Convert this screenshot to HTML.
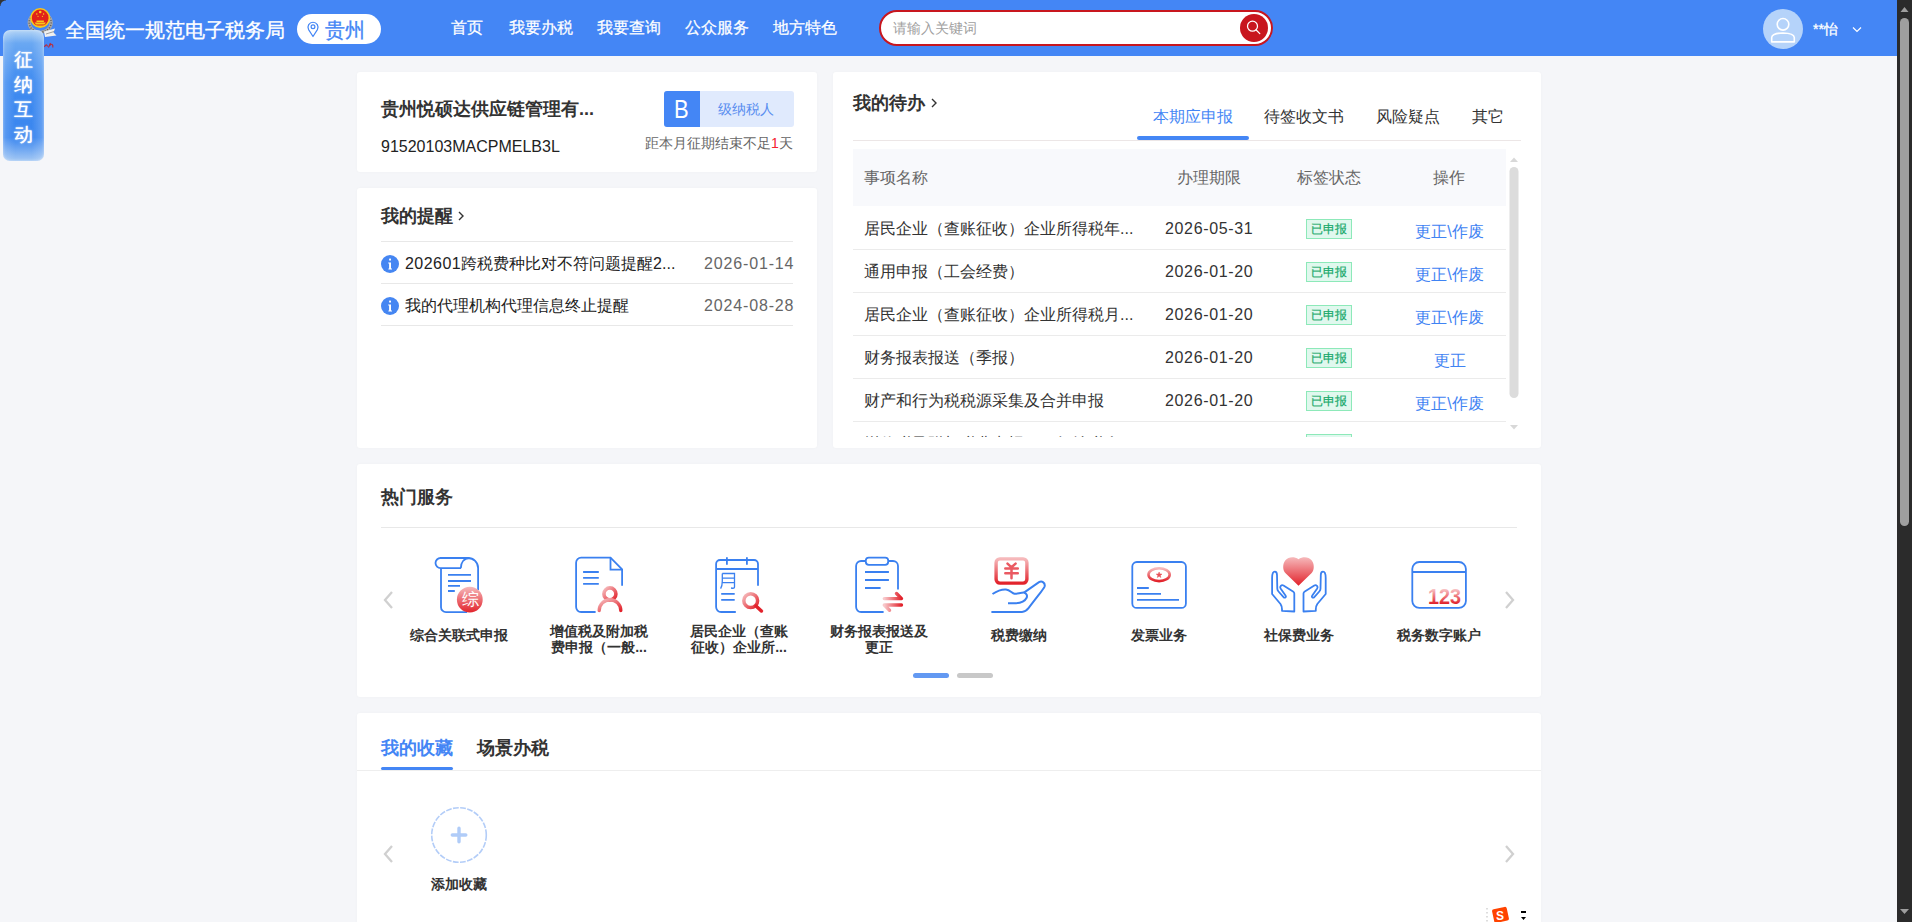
<!DOCTYPE html>
<html><head><meta charset="utf-8">
<style>
*{margin:0;padding:0;box-sizing:border-box}
html,body{width:1912px;height:922px;overflow:hidden}
body{background:#f5f6f9;font-family:"Liberation Sans",sans-serif;color:#333;position:relative}
.abs{position:absolute}
.hdr{left:0;top:0;width:1897px;height:56px;background:#4486f5}
.card{position:absolute;background:#fff;border-radius:3px;box-shadow:0 0 3px rgba(0,0,0,0.03)}
.t{position:absolute;white-space:nowrap;line-height:1}
.line{position:absolute;height:1px;background:#e8e8e8}
.sb{left:1897px;top:0;width:15px;height:922px;background:#2b2b2b}
.ic{position:absolute;width:70px;height:70px;top:550px}
.lbl{position:absolute;width:140px;text-align:center;font-size:14px;font-weight:bold;color:#333;line-height:16px;top:627px}
.row{position:absolute;left:853px;width:653px;height:43px;border-bottom:1px solid #ebebeb}
.row .n{position:absolute;left:11px;top:14px;font-size:16px;color:#333;line-height:16px;white-space:nowrap}
.row .d{position:absolute;left:312px;top:14px;font-size:16px;color:#333;line-height:16px;letter-spacing:0.65px}
.row .b{position:absolute;left:453px;top:12px;width:46px;height:20px;border:1px solid #8de9b9;background:#e0f8ee;color:#17a86a;font-size:12px;line-height:18px;text-align:center;-webkit-text-stroke:0.2px #17a86a}
.row .o{position:absolute;left:540px;width:113px;top:17px;text-align:center;font-size:16px;color:#3f83f3;line-height:16px}
</style></head><body>
<!-- header -->
<div class="abs hdr"></div>
<svg class="abs" style="left:24px;top:6px" width="36" height="44" viewBox="0 0 36 44">
  <ellipse cx="16.2" cy="16.5" rx="11" ry="9.8" fill="none" stroke="#a8a8a8" stroke-width="3.2"/>
  <ellipse cx="16.2" cy="16.5" rx="11" ry="9.8" fill="none" stroke="#5e5e5e" stroke-width="1.6" stroke-dasharray="1 1.6"/>
  <path d="M20 25.5 L31 22.5 L29.5 26.5 L32.5 29.5 L21 31 Z" fill="#f0f0f0"/>
  <path d="M22 28 L30 25.5" stroke="#888" stroke-width="0.8"/>
  <circle cx="16.2" cy="12" r="10" fill="#f7c81a"/>
  <circle cx="16.2" cy="12" r="8.4" fill="#e2231a"/>
  <circle cx="16.2" cy="6" r="1.3" fill="#f7d21a"/>
  <circle cx="12.8" cy="8" r="0.7" fill="#f7d21a"/><circle cx="19.6" cy="8" r="0.7" fill="#f7d21a"/>
  <circle cx="14" cy="10.3" r="0.6" fill="#f7d21a"/><circle cx="18.4" cy="10.3" r="0.6" fill="#f7d21a"/>
  <path d="M12.5 14.5 H19.9 V16 H12.5 Z M10.5 16.5 H21.9 L20.5 18.5 H12 Z M12 19.5 H20.4 V21 H12 Z" fill="#f7c81a"/>
  <path d="M20.5 41 C21.5 38 23 38.5 23.5 40.5 M24.5 41.5 L26.5 37 M26 39.5 C27 37.5 29.5 38 28.8 41.5" stroke="#c4262e" stroke-width="1.1" fill="none"/>
</svg>
<div class="t" style="left:65px;top:19.5px;font-size:20px;color:#fff;-webkit-text-stroke:0.35px #fff">全国统一规范电子税务局</div>
<div class="abs" style="left:297px;top:14px;width:84px;height:30px;border-radius:15px;background:#fff"></div>
<svg class="abs" style="left:306px;top:21px" width="14" height="17" viewBox="0 0 14 17">
  <path d="M7 15.5 L2.6 8.6 A5 5 0 1 1 11.4 8.6 Z" fill="none" stroke="#4486f5" stroke-width="1.2" stroke-linejoin="round"/>
  <circle cx="7" cy="5.8" r="1.9" fill="none" stroke="#4486f5" stroke-width="1.2"/>
</svg>
<div class="t" style="left:325px;top:19.5px;font-size:20px;color:#4486f5;-webkit-text-stroke:0.35px #4486f5">贵州</div>
<div class="t" style="left:451px;top:20px;font-size:16px;color:#fff;-webkit-text-stroke:0.25px #fff">首页</div>
<div class="t" style="left:509px;top:20px;font-size:16px;color:#fff;-webkit-text-stroke:0.25px #fff">我要办税</div>
<div class="t" style="left:597px;top:20px;font-size:16px;color:#fff;-webkit-text-stroke:0.25px #fff">我要查询</div>
<div class="t" style="left:685px;top:20px;font-size:16px;color:#fff;-webkit-text-stroke:0.25px #fff">公众服务</div>
<div class="t" style="left:773px;top:20px;font-size:16px;color:#fff;-webkit-text-stroke:0.25px #fff">地方特色</div>
<div class="abs" style="left:879px;top:10px;width:394px;height:36px;border-radius:18px;background:#fff;border:2px solid #c8161e"></div>
<div class="t" style="left:893px;top:21px;font-size:14px;color:#a0a0a0">请输入关键词</div>
<div class="abs" style="left:1240px;top:14px;width:28px;height:28px;border-radius:14px;background:#c8161e"></div>
<svg class="abs" style="left:1240px;top:14px" width="28" height="28" viewBox="0 0 28 28">
  <circle cx="12.5" cy="12.2" r="5" fill="none" stroke="#fff" stroke-width="1.25"/>
  <path d="M16.2 16 L19.8 19.6" stroke="#fff" stroke-width="1.25" stroke-linecap="round"/>
</svg>
<div class="abs" style="left:1763px;top:9px;width:40px;height:40px;border-radius:20px;background:#b5d3fa"></div>
<svg class="abs" style="left:1763px;top:9px" width="40" height="40" viewBox="0 0 40 40">
  <circle cx="20" cy="15.3" r="5.8" fill="none" stroke="#fff" stroke-width="1.6"/>
  <path d="M8.7 32.9 L8.7 28.5 Q9 24.2 20 24 Q31 24.2 31.3 28.5 L31.3 32.9 Z" fill="none" stroke="#fff" stroke-width="1.6" stroke-linejoin="round"/>
</svg>
<div class="t" style="left:1813px;top:22px;font-size:14px;color:#fff;-webkit-text-stroke:0.3px #fff">**怡</div>
<svg class="abs" style="left:1850px;top:24px" width="14" height="12" viewBox="0 0 14 12">
  <path d="M3 3.5 L7 7.5 L11 3.5" fill="none" stroke="#fff" stroke-width="1.2"/>
</svg>
<!-- side tab -->
<div class="abs" style="left:3px;top:30px;width:41px;height:131px;border-radius:7px;background:linear-gradient(90deg,rgba(255,255,255,0.18) 0%,rgba(255,255,255,0) 30%,rgba(255,255,255,0) 70%,rgba(255,255,255,0.22) 100%),linear-gradient(180deg,#b3d4f6 0%,#6aa8f2 10%,#3f8bf0 40%,#3a86ef 82%,#a4c8f4 100%);box-shadow:inset 0 0 3px rgba(255,255,255,0.5)"></div>
<div class="abs" style="left:14px;top:47px;width:19px;font-size:18.5px;line-height:25px;color:#fff;text-shadow:0 0 1px #fff,0 0 3px rgba(255,255,255,0.5)">征纳互动</div>

<!-- card 1 -->
<div class="card" style="left:357px;top:72px;width:460px;height:100px"></div>
<div class="t" style="left:381px;top:100px;font-size:18px;font-weight:bold;color:#333">贵州悦硕达供应链管理有...</div>
<div class="t" style="left:381px;top:139px;font-size:16px;color:#222">91520103MACPMELB3L</div>
<div class="abs" style="left:664px;top:91px;width:130px;height:36px;border-radius:3px;background:#e0eafd"></div>
<div class="abs" style="left:664px;top:91px;width:36px;height:36px;border-radius:3px 0 0 3px;background:#4486f5"></div>
<div class="t" style="left:673.5px;top:97px;font-size:25px;color:#fff;transform:scaleX(0.88);transform-origin:0 0">B</div>
<div class="t" style="left:718px;top:102px;font-size:14px;color:#5a8ef0">级纳税人</div>
<div class="t" style="left:645px;top:136px;font-size:14px;color:#666">距本月征期结束不足<span style="color:#f5222d">1</span>天</div>

<!-- card 2 -->
<div class="card" style="left:357px;top:188px;width:460px;height:260px"></div>
<div class="t" style="left:381px;top:207px;font-size:18px;font-weight:bold;color:#333">我的提醒</div>
<svg class="abs" style="left:456px;top:209px" width="10" height="14" viewBox="0 0 10 14"><path d="M3 3 L7 7 L3 11" fill="none" stroke="#333" stroke-width="1.4"/></svg>
<div class="line" style="left:381px;top:241px;width:412px"></div>
<div class="line" style="left:381px;top:283px;width:412px"></div>
<div class="line" style="left:381px;top:325px;width:412px"></div>
<svg class="abs" style="left:380.5px;top:255px" width="18" height="18" viewBox="0 0 18 18"><circle cx="9" cy="9" r="9" fill="#4586f2"/><rect x="8.1" y="3.6" width="1.9" height="1.9" fill="#fff"/><path d="M7.2 7.6 H10 V13.4 H11 V14.4 H7.4 V13.4 H8.1 V8.6 H7.2 Z" fill="#fff"/></svg>
<div class="t" style="left:405px;top:256px;font-size:16px;color:#222"><span style="letter-spacing:0.45px">202601</span>跨税费种比对不符问题提醒2...</div>
<div class="t" style="left:704px;top:256px;font-size:16px;color:#666;letter-spacing:0.85px">2026-01-14</div>
<svg class="abs" style="left:380.5px;top:297px" width="18" height="18" viewBox="0 0 18 18"><circle cx="9" cy="9" r="9" fill="#4586f2"/><rect x="8.1" y="3.6" width="1.9" height="1.9" fill="#fff"/><path d="M7.2 7.6 H10 V13.4 H11 V14.4 H7.4 V13.4 H8.1 V8.6 H7.2 Z" fill="#fff"/></svg>
<div class="t" style="left:405px;top:298px;font-size:16px;color:#222">我的代理机构代理信息终止提醒</div>
<div class="t" style="left:704px;top:298px;font-size:16px;color:#666;letter-spacing:0.85px">2024-08-28</div>

<!-- card 3 todo -->
<div class="card" style="left:833px;top:72px;width:708px;height:376px"></div>
<div class="t" style="left:853px;top:94px;font-size:18px;font-weight:bold;color:#333">我的待办</div>
<svg class="abs" style="left:928.5px;top:96px" width="10" height="14" viewBox="0 0 10 14"><path d="M3 3 L7 7 L3 11" fill="none" stroke="#333" stroke-width="1.4"/></svg>
<div class="t" style="left:1153px;top:109px;font-size:16px;color:#4486f5">本期应申报</div>
<div class="t" style="left:1264px;top:109px;font-size:16px;color:#333">待签收文书</div>
<div class="t" style="left:1376px;top:109px;font-size:16px;color:#333">风险疑点</div>
<div class="t" style="left:1472px;top:109px;font-size:16px;color:#333">其它</div>
<div class="line" style="left:853px;top:140px;width:668px;background:#ece6e6"></div>
<div class="abs" style="left:1137px;top:136px;width:112px;height:4px;border-radius:2px;background:#4486f5"></div>
<div class="abs" style="left:853px;top:149px;width:653px;height:288px;overflow:hidden">
  <div class="abs" style="left:0;top:0;width:653px;height:57px;background:#f8f9fc"></div>
  <div class="t" style="left:11px;top:21px;font-size:16px;color:#666">事项名称</div>
  <div class="t" style="left:324px;top:21px;font-size:16px;color:#666">办理期限</div>
  <div class="t" style="left:444px;top:21px;font-size:16px;color:#666">标签状态</div>
  <div class="t" style="left:580px;top:21px;font-size:16px;color:#666">操作</div>
  <div class="row" style="left:0;top:58px"><span class="n">居民企业（查账征收）企业所得税年...</span><span class="d">2026-05-31</span><span class="b">已申报</span><span class="o">更正\作废</span></div>
  <div class="row" style="left:0;top:101px"><span class="n">通用申报（工会经费）</span><span class="d">2026-01-20</span><span class="b">已申报</span><span class="o">更正\作废</span></div>
  <div class="row" style="left:0;top:144px"><span class="n">居民企业（查账征收）企业所得税月...</span><span class="d">2026-01-20</span><span class="b">已申报</span><span class="o">更正\作废</span></div>
  <div class="row" style="left:0;top:187px"><span class="n">财务报表报送（季报）</span><span class="d">2026-01-20</span><span class="b">已申报</span><span class="o">更正</span></div>
  <div class="row" style="left:0;top:230px"><span class="n">财产和行为税税源采集及合并申报</span><span class="d">2026-01-20</span><span class="b">已申报</span><span class="o">更正\作废</span></div>
  <div class="row" style="left:0;top:273px"><span class="n">增值税及附加税费申报（一般纳税人...</span><span class="b">已申报</span></div>
</div>
<!-- inner scrollbar -->
<svg class="abs" style="left:1508px;top:153px" width="12" height="280" viewBox="0 0 12 280">
  <path d="M2 9 L6 4.5 L10 9 Z" fill="#d8d8d8"/>
  <rect x="1.5" y="14" width="9" height="231" rx="4.5" fill="#dcdcdc"/>
  <path d="M2 272 L6 276.5 L10 272 Z" fill="#d8d8d8"/>
</svg>

<!-- card 4 hot services -->
<div class="card" style="left:357px;top:464px;width:1184px;height:233px"></div>
<div class="t" style="left:381px;top:488px;font-size:18px;font-weight:bold;color:#333">热门服务</div>
<div class="line" style="left:381px;top:527px;width:1136px"></div>
<svg class="abs" style="left:380px;top:588px" width="16" height="24" viewBox="0 0 16 24"><path d="M12 4 L5 12 L12 20" fill="none" stroke="#d0d0d0" stroke-width="2.3"/></svg>
<svg class="abs" style="left:1502px;top:588px" width="16" height="24" viewBox="0 0 16 24"><path d="M4 4 L11 12 L4 20" fill="none" stroke="#d0d0d0" stroke-width="2.3"/></svg>
<svg width="0" height="0" style="position:absolute">
 <defs>
  <linearGradient id="rg" x1="0" y1="0" x2="0" y2="1"><stop offset="0" stop-color="#f6b9bb"/><stop offset="1" stop-color="#e2222b"/></linearGradient>
  <linearGradient id="rgd" x1="0" y1="0" x2="1" y2="1"><stop offset="0" stop-color="#f6bfc1"/><stop offset="1" stop-color="#e2222b"/></linearGradient>
  <linearGradient id="rg123" gradientUnits="userSpaceOnUse" x1="0" y1="38" x2="0" y2="54"><stop offset="0" stop-color="#fad0d2"/><stop offset="1" stop-color="#e0202a"/></linearGradient>
  <linearGradient id="rgh" x1="0" y1="0" x2="1" y2="0"><stop offset="0" stop-color="#f8c9cb"/><stop offset="1" stop-color="#e2222b"/></linearGradient>
 </defs>
</svg>
<svg class="ic" style="left:425px" viewBox="0 0 70 70" fill="none" stroke="#3a80f0" stroke-width="1.8" stroke-linecap="butt">
  <path d="M36 18.2 H15.6 A5 5 0 0 1 15.6 8 H43 A10 10 0 0 1 53.1 18 V40"/>
  <path d="M35.8 18.2 C35.8 12.5 39 8.3 44.5 8"/>
  <path d="M16 18.2 V57.2 A5 5 0 0 0 21 62.2 H42"/>
  <path d="M23 24.9 H46 M23 31 H46 M23 35.8 H35 M23 41 H29.8"/>
  <circle cx="44.8" cy="49.7" r="12.9" fill="url(#rg)" stroke="none"/>
  <text x="45" y="55.3" font-size="16.5" fill="#fff" stroke="none" text-anchor="middle" font-family="Liberation Sans,sans-serif">综</text>
</svg>
<svg class="ic" style="left:563px" viewBox="0 0 70 70" fill="none" stroke="#3a80f0" stroke-width="1.8">
  <path d="M32.6 62 H18.1 A5 5 0 0 1 13.1 57 V12.7 A5 5 0 0 1 18.1 7.7 H47.5 L59.1 19.4 V35.7"/>
  <path d="M47.5 7.7 V19.7 H59.1"/>
  <path d="M20.1 22 H35.8 M20.1 27.9 H35.8 M20.1 33.9 H35.8"/>
  <circle cx="46.9" cy="43.9" r="6" stroke="url(#rgd)" stroke-width="3.6"/>
  <path d="M36.2 60.5 A10.8 10.8 0 0 1 57.8 60.5" stroke="url(#rgd)" stroke-width="3.4" stroke-linecap="round"/>
</svg>
<svg class="ic" style="left:703px" viewBox="0 0 70 70" fill="none" stroke="#3a80f0" stroke-width="1.8">
  <path d="M32.8 62 H18.1 A5 5 0 0 1 13.1 57 V14 A4 4 0 0 1 17.1 10 H51 A4 4 0 0 1 55 14 V35.7"/>
  <path d="M13.1 19 H55 M23.9 7.2 V14.8 M43.9 7.2 V14.8"/>
  <path d="M19.3 23.5 V31 C19.3 35 18.6 37 17.6 38.6 M19.3 23.5 H31.5 V37 C31.5 38.3 30.5 38.5 28 38 M19.3 28.2 H31.5 M19.3 32.6 H31.5" stroke-width="1.3"/>
  <path d="M18.2 43.9 H31.7 M18.2 49.9 H31.7"/>
  <circle cx="47.7" cy="50.7" r="6.9" stroke="url(#rgd)" stroke-width="3.5"/>
  <path d="M53 56 L58.4 61" stroke="#e2222b" stroke-width="3.5" stroke-linecap="round"/>
</svg>
<svg class="ic" style="left:843px" viewBox="0 0 70 70" fill="none" stroke="#3a80f0" stroke-width="1.8">
  <path d="M40.6 62 H18.1 A5 5 0 0 1 13.1 57 V16 A5 5 0 0 1 18.1 11 H22.8 M45.2 11 H50 A5 5 0 0 1 55 16 V39.5"/>
  <rect x="22.8" y="7.6" width="22.4" height="7.2" rx="3"/>
  <path d="M22 22 H45.9 M22 30 H45.9 M22 38 H37.6"/>
  <path d="M41.3 48.6 H58.5 L53.5 43.5 M58.5 55 H41.3 L46.5 60.2" stroke="url(#rgh)" stroke-width="3.4" stroke-linecap="round" stroke-linejoin="round"/>
</svg>
<svg class="ic" style="left:983px" viewBox="0 0 70 70" fill="none" stroke="#3a80f0" stroke-width="2">
  <rect x="13.1" y="8.9" width="30.8" height="24.2" rx="3.8" stroke="url(#rg)" stroke-width="3.4"/>
  <path d="M24.5 13.6 L28.5 17.3 L32.6 13.6 M22.3 18.6 H34.8 M22.3 23.2 H34.8 M28.5 17.3 V28.3" stroke="#ea5a62" stroke-width="2.5" stroke-linecap="round"/>
  <path d="M9.5 44 C14 41 19 39.2 23 39.5 C27 39.8 29 43.5 31.5 43.8 C34 44 38 42.5 41 42.6"/>
  <path d="M41 42.6 C44 43.5 44.5 46 43.5 48 C42 51 37 53.2 31 53.2 H25"/>
  <path d="M41 42.6 L56 32.2 C59 30.5 62.5 33 61.6 36.5 C61 38.5 59 40.5 45.5 58.2 C43.8 60.5 42 61.9 39 61.9 H8.4"/>
</svg>
<svg class="ic" style="left:1123px" viewBox="0 0 70 70" fill="none" stroke="#3a80f0" stroke-width="1.8">
  <rect x="9.3" y="12" width="53.6" height="45.9" rx="4.5"/>
  <ellipse cx="36.1" cy="24.7" rx="10.6" ry="6.4" stroke="url(#rg)" stroke-width="2.6"/>
  <path d="M36.1 22 L36.9 24 L39 24.1 L37.3 25.4 L37.9 27.5 L36.1 26.3 L34.3 27.5 L34.9 25.4 L33.2 24.1 L35.3 24 Z" fill="#e8525a" stroke="#e8525a" stroke-width="0.5"/>
  <path d="M14 38 H25.8 M14 43.9 H38 M14 49.9 H56"/>
</svg>
<svg class="ic" style="left:1263px" viewBox="0 0 70 70" fill="none" stroke="#3a80f0" stroke-width="1.8">
  <path d="M35.5 35.8 L22.6 23.2 C19.4 20 19.5 13.8 22.4 10.2 C25.5 6.6 31.2 6.2 35.5 9.2 C39.8 6.2 45.5 6.6 48.6 10.2 C51.5 13.8 51.6 20 48.4 23.2 Z" fill="url(#rg)" stroke="none"/>
  <g id="hl"><path d="M11.8 21.6 C9.6 21.6 9.1 25 9.1 28 V44 L17.5 54 C18.5 55.5 19 57.5 19 59.2 V60.8 L31.3 61.5 V43.5 C31.3 42.5 30.8 42 30 41.5 L20.5 35.5 C18.5 34.3 16.3 36.5 17.6 38.5 L22.5 45.5 C23.8 47.3 21.8 48.5 20.3 46.8 L15.5 41.5 C14.8 40.7 14.3 40 14.3 38.8 L14 25 C14 23 13.3 21.6 11.8 21.6 Z" stroke-linejoin="round"/></g>
  <use href="#hl" transform="translate(71.8 0) scale(-1 1)"/>
</svg>
<svg class="ic" style="left:1403px" viewBox="0 0 70 70" fill="none" stroke="#3a80f0" stroke-width="1.8">
  <rect x="9.3" y="12" width="53.6" height="45.9" rx="7"/>
  <path d="M9.3 22 H62.9"/>
  <text x="25" y="54" font-size="22" font-weight="bold" fill="url(#rg123)" stroke="none" textLength="33" lengthAdjust="spacingAndGlyphs" font-family="Liberation Sans,sans-serif">123</text>
</svg>

<div class="lbl" style="left:389px;top:627px;line-height:16px">综合关联式申报</div>
<div class="lbl" style="left:529px;top:623px">增值税及附加税<br>费申报（一般...</div>
<div class="lbl" style="left:669px;top:623px">居民企业（查账<br>征收）企业所...</div>
<div class="lbl" style="left:809px;top:623px">财务报表报送及<br>更正</div>
<div class="lbl" style="left:949px;top:627px;line-height:16px">税费缴纳</div>
<div class="lbl" style="left:1089px;top:627px;line-height:16px">发票业务</div>
<div class="lbl" style="left:1229px;top:627px;line-height:16px">社保费业务</div>
<div class="lbl" style="left:1369px;top:627px;line-height:16px">税务数字账户</div>
<div class="abs" style="left:913px;top:673px;width:36px;height:5px;border-radius:3px;background:#6399f2"></div>
<div class="abs" style="left:957px;top:673px;width:36px;height:5px;border-radius:3px;background:#c8c8c8"></div>

<!-- card 5 favorites -->
<div class="card" style="left:357px;top:713px;width:1184px;height:230px"></div>
<div class="t" style="left:381px;top:739px;font-size:18px;font-weight:bold;color:#4486f5">我的收藏</div>
<div class="t" style="left:477px;top:739px;font-size:18px;font-weight:bold;color:#333">场景办税</div>
<div class="abs" style="left:381px;top:767px;width:72px;height:3px;border-radius:2px;background:#4486f5"></div>
<div class="line" style="left:357px;top:770px;width:1184px;background:#eeeeee"></div>
<svg class="abs" style="left:380px;top:842px" width="16" height="24" viewBox="0 0 16 24"><path d="M12 4 L5 12 L12 20" fill="none" stroke="#d0d0d0" stroke-width="2.3"/></svg>
<svg class="abs" style="left:1502px;top:842px" width="16" height="24" viewBox="0 0 16 24"><path d="M4 4 L11 12 L4 20" fill="none" stroke="#d0d0d0" stroke-width="2.3"/></svg>
<svg class="abs" style="left:430px;top:806px" width="58" height="58" viewBox="0 0 58 58">
  <circle cx="29" cy="29" r="27.3" fill="none" stroke="#b3cdf8" stroke-width="1.6" stroke-dasharray="5.8 1.4"/>
  <path d="M29 22.3 V35.8 M22.3 29 H35.8" stroke="#b0ccf8" stroke-width="3.4" stroke-linecap="round"/>
</svg>
<div class="t" style="left:431px;top:877px;font-size:14px;font-weight:bold;color:#333">添加收藏</div>
<!-- sogou -->
<svg class="abs" style="left:1484px;top:903px" width="46" height="19" viewBox="0 0 46 19">
  <path d="M3 5 V19" stroke="#bbb" stroke-width="1" stroke-dasharray="1.5 2.5"/>
  <rect x="9" y="5" width="15" height="14" rx="2" transform="rotate(-12 16 12)" fill="#ff4300"/>
  <text x="12" y="17" font-size="12" font-weight="bold" fill="#fff" font-family="Liberation Sans">S</text>
  <rect x="37" y="8" width="5" height="2" fill="#000"/>
  <path d="M37 14 L42 14 L39.5 17 Z" fill="#000"/>
</svg>

<!-- page scrollbar -->
<div class="abs sb"></div>
<svg class="abs" style="left:1897px;top:0" width="15" height="922" viewBox="0 0 15 922">
  <path d="M3.5 12 L7.5 7 L11.5 12 Z" fill="#9e9e9e"/>
  <rect x="3" y="18" width="9" height="508" rx="4.5" fill="#9f9f9f"/>
  <path d="M3 909 L7.5 914 L12 909 Z" fill="#9e9e9e"/>
</svg>
<div class="abs" style="left:0;top:0;width:6px;height:6px;background:radial-gradient(circle at 6px 6px,transparent 5px,#333 6px)"></div>
</body></html>
